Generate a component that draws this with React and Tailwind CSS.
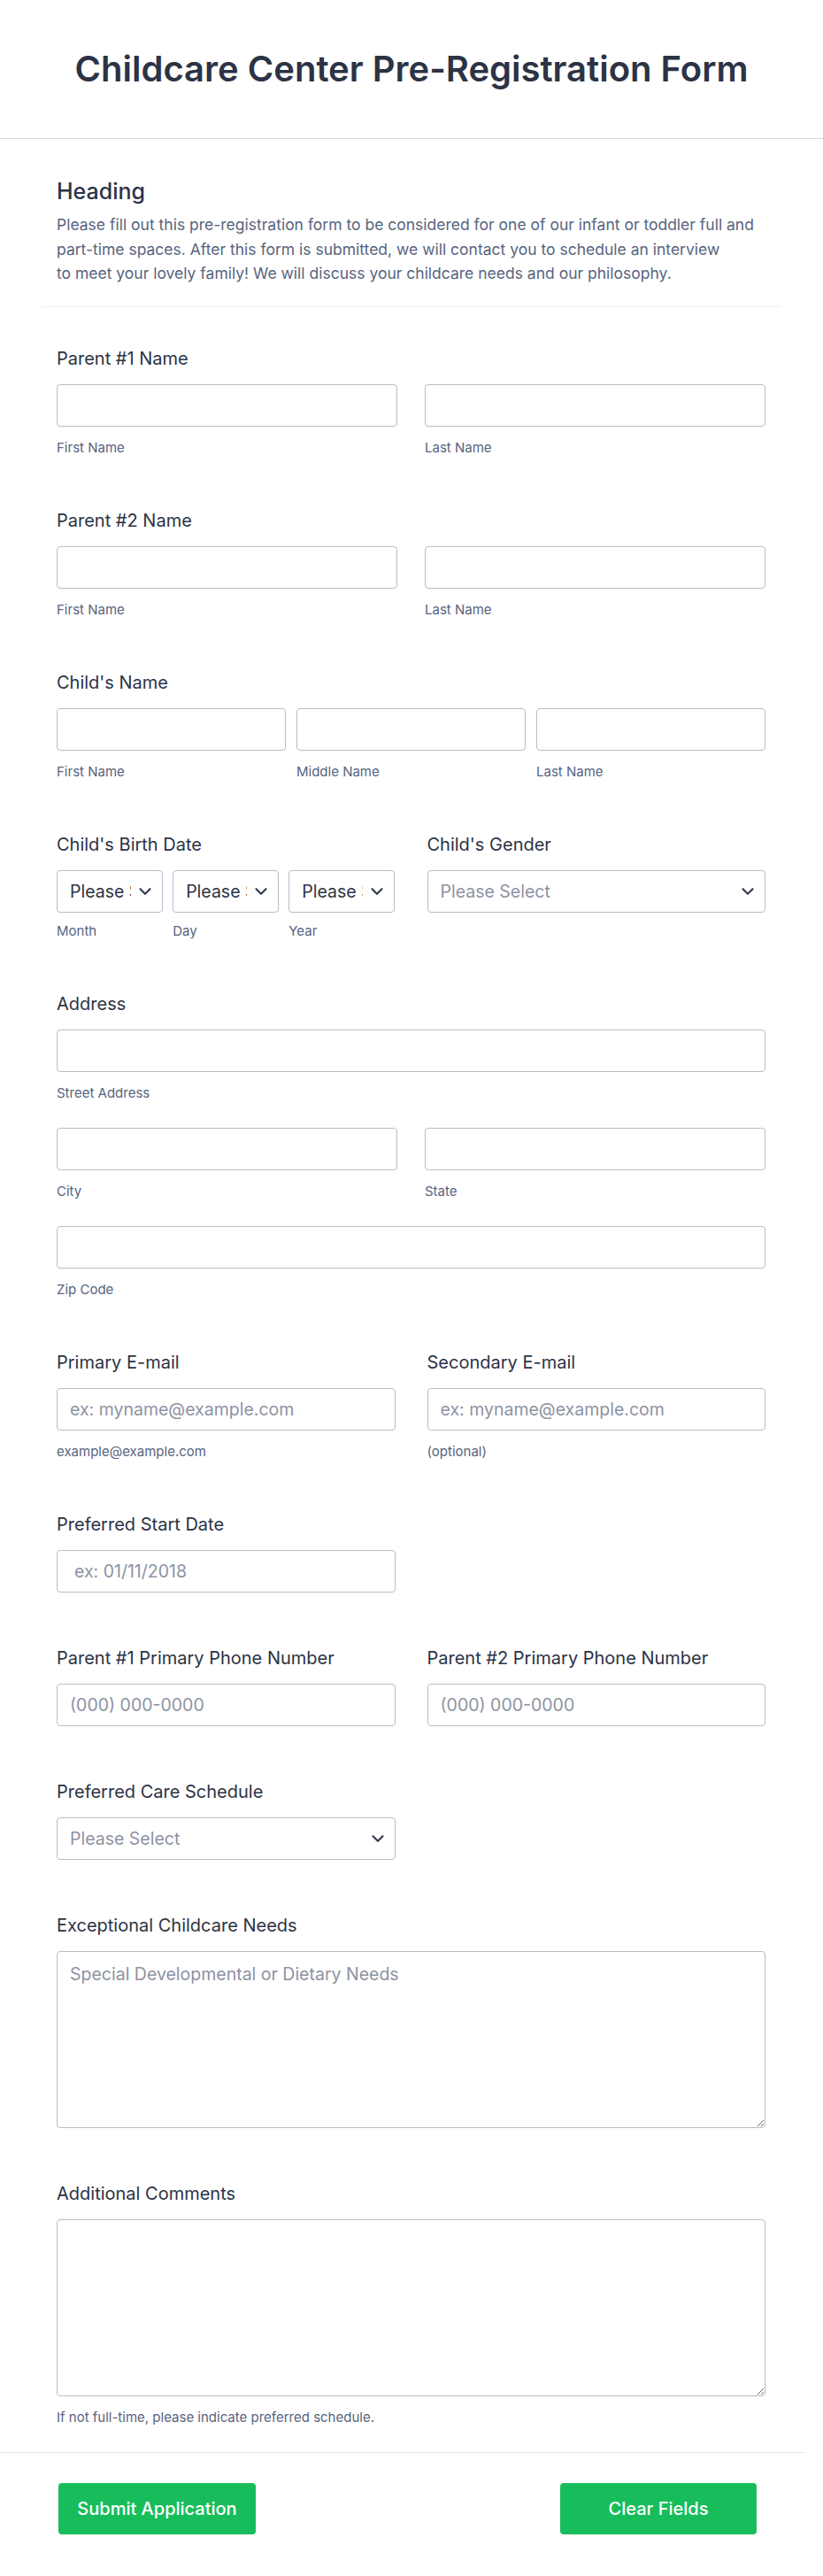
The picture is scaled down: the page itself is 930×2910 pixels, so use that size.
import { ChevronDown } from 'lucide-react';

const inputCls =
    'block w-full h-[48px] rounded-[4px] border border-[#b8bdc9] bg-white px-[14px] text-[19.5px] text-[#2c3345] placeholder:text-[#8d93a3] outline-none';

function Label({ children }) {
    return <div className="text-[20px] leading-[22px] font-normal text-[#2c3345]">{children}</div>;
}

function Sub({ children, className = 'mt-[15px]' }) {
    return <div className={`${className} text-[15px] leading-[18px] text-[#57647e]`}>{children}</div>;
}

function Input({ placeholder, className = '' }) {
    return <input type="text" placeholder={placeholder} className={`${inputCls} ${className}`} />;
}

function Select({ text = 'Please Select', muted = false, clip = false }) {
    return (
        <div className="flex items-center h-[48px] rounded-[4px] border border-[#b8bdc9] bg-white pl-[14px] pr-[8px]">
            <span
                className={[
                    'overflow-hidden whitespace-nowrap text-[19.5px] leading-[24px]',
                    clip ? 'w-[69px]' : 'flex-1',
                    muted ? 'text-[#8d93a3]' : 'text-[#2c3345]',
                ].join(' ')}
            >
                {text}
            </span>
            <ChevronDown size={22} strokeWidth={2.4} className="ml-auto shrink-0 text-[#343c4f]" />
        </div>
    );
}

function NameField({ label, parts, cols = 'grid-cols-2 gap-x-[31px]', className }) {
    return (
        <div className={className}>
            <Label>{label}</Label>
            <div className={`mt-[18px] grid ${cols}`}>
                {parts.map((p) => (
                    <div key={p}>
                        <Input />
                        <Sub>{p}</Sub>
                    </div>
                ))}
            </div>
        </div>
    );
}

export default function App() {
    return (
        <div className="min-h-[2910px] w-full bg-white font-['Inter','Noto_Sans',sans-serif] text-[#2c3345]">
            <header className="flex h-[157px] items-center justify-center border-b border-[#d6d9e1]">
                <h1 className="text-[40px] leading-[46px] font-semibold text-[#2c3345]">
                    Childcare Center Pre-Registration Form
                </h1>
            </header>

            <div className="ml-[46px] w-[837px]">
                <section className="border-b border-[#eceef2] px-[18px] pt-[44px] pb-[23px]">
                    <h2 className="text-[25px] leading-[30px] font-medium text-[#2c3345]">Heading</h2>
                    <p className="mt-[9px] whitespace-nowrap text-[17.5px] leading-[27.5px] text-[#57647e]">
                        Please fill out this pre-registration form to be considered for one of our infant or toddler full and
                        <br />
                        part-time spaces. After this form is submitted, we will contact you to schedule an interview
                        <br />
                        to meet your lovely family! We will discuss your childcare needs and our philosophy.
                    </p>
                </section>

                <form className="px-[18px] pt-[47px] pb-[30px]">
                    <NameField label="Parent #1 Name" parts={['First Name', 'Last Name']} />
                    <NameField className="mt-[62px]" label="Parent #2 Name" parts={['First Name', 'Last Name']} />
                    <NameField
                        className="mt-[62px]"
                        label="Child's Name"
                        cols="grid-cols-3 gap-x-[12px]"
                        parts={['First Name', 'Middle Name', 'Last Name']}
                    />

                    <div className="mt-[62px] grid grid-cols-2 gap-x-[36px]">
                        <div>
                            <Label>Child's Birth Date</Label>
                            <div className="mt-[18px] grid grid-cols-3 gap-x-[11px]">
                                {['Month', 'Day', 'Year'].map((p) => (
                                    <div key={p}>
                                        <Select clip />
                                        <Sub className="mt-[12px]">{p}</Sub>
                                    </div>
                                ))}
                            </div>
                        </div>
                        <div>
                            <Label>Child's Gender</Label>
                            <div className="mt-[18px]">
                                <Select muted />
                            </div>
                        </div>
                    </div>

                    <div className="mt-[62px]">
                        <Label>Address</Label>
                        <div className="mt-[18px]">
                            <Input />
                            <Sub>Street Address</Sub>
                        </div>
                        <div className="mt-[30px] grid grid-cols-2 gap-x-[31px]">
                            <div>
                                <Input />
                                <Sub>City</Sub>
                            </div>
                            <div>
                                <Input />
                                <Sub>State</Sub>
                            </div>
                        </div>
                        <div className="mt-[30px]">
                            <Input />
                            <Sub>Zip Code</Sub>
                        </div>
                    </div>

                    <div className="mt-[62px] grid grid-cols-2 gap-x-[36px]">
                        <div>
                            <Label>Primary E-mail</Label>
                            <div className="mt-[18px]">
                                <Input placeholder="ex: myname@example.com" />
                                <Sub>example@example.com</Sub>
                            </div>
                        </div>
                        <div>
                            <Label>Secondary E-mail</Label>
                            <div className="mt-[18px]">
                                <Input placeholder="ex: myname@example.com" />
                                <Sub>(optional)</Sub>
                            </div>
                        </div>
                    </div>

                    <div className="mt-[62px] grid grid-cols-2 gap-x-[36px]">
                        <div>
                            <Label>Preferred Start Date</Label>
                            <div className="mt-[18px]">
                                <Input placeholder="ex: 01/11/2018" className="pl-[19px]" />
                            </div>
                        </div>
                    </div>

                    <div className="mt-[63px] grid grid-cols-2 gap-x-[36px]">
                        <div>
                            <Label>Parent #1 Primary Phone Number</Label>
                            <div className="mt-[18px]">
                                <Input placeholder="(000) 000-0000" />
                            </div>
                        </div>
                        <div>
                            <Label>Parent #2 Primary Phone Number</Label>
                            <div className="mt-[18px]">
                                <Input placeholder="(000) 000-0000" />
                            </div>
                        </div>
                    </div>

                    <div className="mt-[63px] grid grid-cols-2 gap-x-[36px]">
                        <div>
                            <Label>Preferred Care Schedule</Label>
                            <div className="mt-[18px]">
                                <Select muted />
                            </div>
                        </div>
                    </div>

                    <div className="mt-[63px]">
                        <Label>Exceptional Childcare Needs</Label>
                        <textarea
                            placeholder="Special Developmental or Dietary Needs"
                            className="mt-[18px] block h-[200px] w-full rounded-[4px] border border-[#b8bdc9] bg-white px-[14px] py-[12px] text-[19.5px] leading-[26px] text-[#2c3345] placeholder:text-[#8d93a3] outline-none"
                        />
                    </div>

                    <div className="mt-[63px]">
                        <Label>Additional Comments</Label>
                        <textarea className="mt-[18px] block h-[200px] w-full rounded-[4px] border border-[#b8bdc9] bg-white px-[14px] py-[12px] text-[19.5px] leading-[26px] text-[#2c3345] outline-none" />
                        <Sub>If not full-time, please indicate preferred schedule.</Sub>
                    </div>
                </form>
            </div>

            <footer className="w-[909px] border-t border-[#e3e6ee] pt-[34px] pb-[47px]">
                <div className="flex justify-between pl-[66px] pr-[54px]">
                    <button className="h-[58px] w-[223px] rounded-[4px] bg-[#18bd5b] text-[20px] font-medium text-white">
                        Submit Application
                    </button>
                    <button className="h-[58px] w-[222px] rounded-[4px] bg-[#18bd5b] text-[20px] font-medium text-white">
                        Clear Fields
                    </button>
                </div>
            </footer>
        </div>
    );
}
